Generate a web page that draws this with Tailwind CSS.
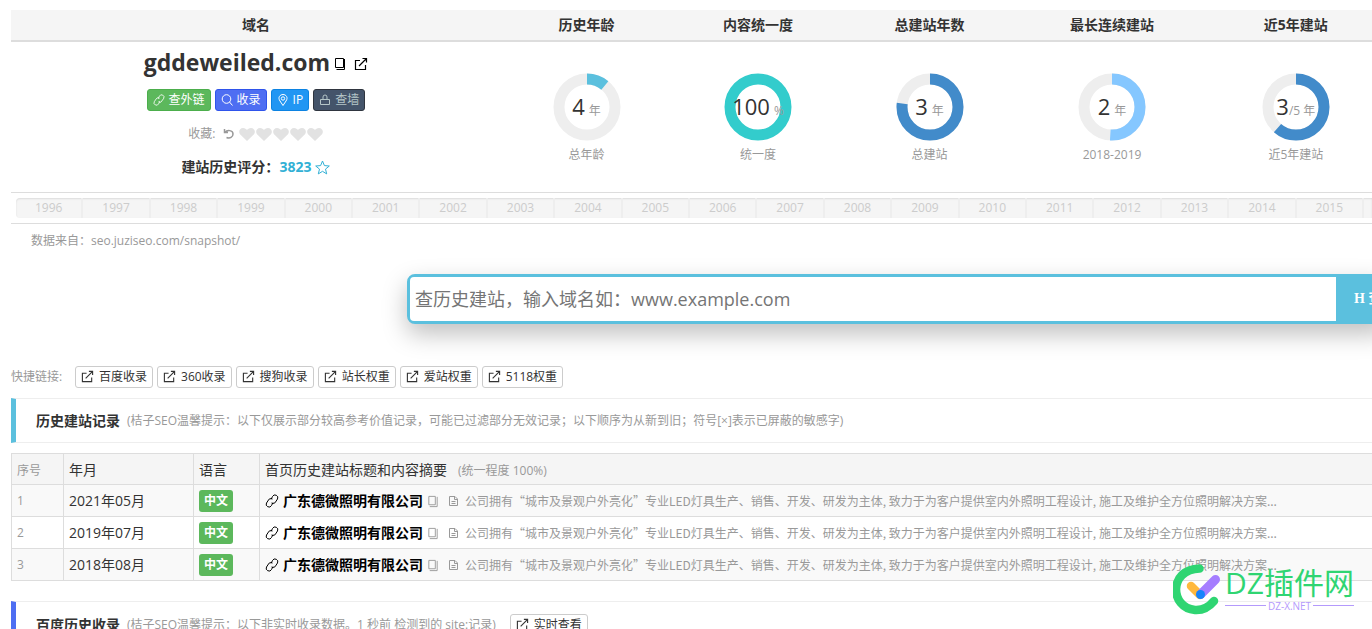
<!DOCTYPE html>
<html lang="zh-CN">
<head>
<meta charset="utf-8">
<title>历史建站查询</title>
<script src="https://cdn.jsdelivr.net/npm/@tailwindcss/browser@4"></script>
</head>
<body class="h-screen overflow-hidden bg-white font-['Open_Sans','Noto_Sans_CJK_SC',sans-serif] text-xs text-[#333]">
<svg class="hidden" aria-hidden="true">
  <symbol id="ext" viewBox="0 0 14 14" fill="none" stroke="currentColor" stroke-width="1.200"><path d="M6 3.500H1.500v9h10V8M5 9l7.500-7.500M8.500 1.500h4v4"/></symbol>
  <symbol id="copy" viewBox="0 0 12 14" fill="none" stroke="currentColor"><path d="M1.500 1.500h7v9h-7zM10.500 2v10.500h-8"/></symbol>
  <symbol id="link" viewBox="0 0 14 14" fill="none" stroke="currentColor"><path d="M6 5.500l1.500-3a2.700 2.700 0 0 1 5 2.500L10.500 8a2.700 2.700 0 0 1-4 1M8 8.500l-1.500 3a2.700 2.700 0 0 1-5-2.500L3.500 6a2.700 2.700 0 0 1 4-1"/></symbol>
  <symbol id="doc" viewBox="0 0 12 12" fill="none" stroke="currentColor"><path d="M1.500 1.500h5.500l2.500 2.500v6.500h-8zM6.500 1.500v3h3M3.500 6.500h4M3.500 8.500h4"/></symbol>
  <symbol id="heart" viewBox="0 0 16 13"><path fill="currentColor" d="M8 13L1 6.300C-1 3.500.8 0 4 0c2 0 3.200 1 4 2 .8-1 2-2 4-2 3.200 0 5 3.500 3 6.300z"/></symbol>
</svg>
<main class="relative h-full overflow-hidden pt-[10px] pl-[11px]">
  <section class="-mr-[11px]">
    <table class="w-full table-fixed border-collapse text-center">
      <colgroup><col class="w-[35.7%]"><col class="w-[12.5%]"><col class="w-[12.5%]"><col class="w-[12.5%]"><col class="w-[14.1%]"><col class="w-[12.7%]"></colgroup>
      <thead>
        <tr class="h-[31px] border-b-2 border-[#ddd] bg-[#f5f5f5] text-sm leading-5 font-bold">
          <th>域名</th><th>历史年龄</th><th>内容统一度</th><th>总建站年数</th><th>最长连续建站</th><th>近5年建站</th>
        </tr>
      </thead>
      <tbody>
        <tr class="h-[151px] border-b border-[#ddd] align-top">
          <td>
            <div class="mt-[3px] flex h-[34px] items-center justify-center">
              <h1 class="text-[23px] leading-8 font-bold">gddeweiled.com</h1>
              <button aria-label="复制" class="ml-1 pt-1 text-black"><svg class="h-[14px] w-3" viewBox="0 0 12 14" fill="none" stroke="currentColor"><path d="M1.500 1.500h8v9h-8zM10.500 2v10.500h-8"/></svg></button>
              <a href="#" aria-label="打开" class="ml-2 pt-1 text-black"><svg class="size-[14px]"><use href="#ext"/></svg></a>
            </div>
            <div class="mt-[10px] flex justify-center gap-1 leading-5 text-white">
              <a href="#" class="flex h-[22px] items-center gap-1 rounded-[3px] border border-[#4cae4c] bg-[#5cb85c] px-[5px]"><svg class="size-3"><use href="#link"/></svg>查外链</a>
              <a href="#" class="flex h-[22px] items-center gap-1 rounded-[3px] border border-[#2f54eb] bg-[#4e6ef2] px-[5px]"><svg class="size-3" viewBox="0 0 12 12" fill="none" stroke="currentColor"><circle cx="5.500" cy="5" r="4.300"/><path d="M8.500 8l3 3.500"/></svg>收录</a>
              <a href="#" class="flex h-[22px] items-center gap-1 rounded-[3px] border border-[#0c83e2] bg-[#2196f3] px-[5px]"><svg class="size-3" viewBox="0 0 12 12" fill="none" stroke="currentColor"><path d="M6 11.500L3 7C.5 3.500 3 .5 6 .5s5.500 3 3 6.500z"/><circle cx="6" cy="4.500" r="1.700"/></svg>IP</a>
              <a href="#" class="flex h-[22px] items-center gap-1 rounded-[3px] border border-[#2f353f] bg-[#44546a] px-[5px] text-[#b5c6c8]"><svg class="size-3" viewBox="0 0 12 12" fill="none" stroke="currentColor"><path d="M1.500 5.500h9v5h-9zM4 5.500V3q0-2 2-2t2 2v2.500"/></svg>查墙</a>
            </div>
            <div class="mt-[13px] flex h-5 items-center justify-center text-[#999]">
              <span>收藏:</span>
              <button aria-label="重置" class="mr-1 ml-2"><svg class="size-3" viewBox="0 0 12 12" fill="none" stroke="currentColor" stroke-width="1.500"><path d="M1.500 1v3.500H5M2 4.500C4 1.500 10 2 10 6c0 3-3 5-6.500 3.500"/></svg></button>
              <span class="flex gap-px text-[#e2e2e2]">
                <svg class="h-[13px] w-4"><use href="#heart"/></svg><svg class="h-[13px] w-4"><use href="#heart"/></svg><svg class="h-[13px] w-4"><use href="#heart"/></svg><svg class="h-[13px] w-4"><use href="#heart"/></svg><svg class="h-[13px] w-4"><use href="#heart"/></svg>
              </span>
            </div>
            <div class="mt-[13px] flex h-5 items-center justify-center text-sm font-bold">建站历史评分：<span class="text-[#31b0d5]">3823</span><svg class="ml-1 size-[15px] text-[#31b0d5]" viewBox="0 0 15 15" fill="none" stroke="currentColor"><path d="M7.500 1l1.900 4.600 4.900.4-3.800 3.100 1.200 4.800-4.200-2.600-4.200 2.600 1.200-4.800L.7 6l4.900-.4z"/></svg></div>
          </td>
          <td class="pt-[31px]">
            <div class="relative mx-auto size-[68px]">
              <svg viewBox="0 0 68 68" class="-rotate-90" fill="none" stroke-width="11"><circle cx="34" cy="34" r="28" stroke="#eee"/><circle cx="34" cy="34" r="28" stroke="#5bc0de" pathLength="100" stroke-dasharray="11 100"/></svg>
              <p class="absolute inset-0 flex items-baseline justify-center gap-1 pt-[17px] text-[22px] leading-8 whitespace-nowrap">4<span class="text-xs text-[#999]">年</span></p>
            </div>
            <p class="mt-1 leading-5 text-[#999]">总年龄</p>
          </td>
          <td class="pt-[31px]">
            <div class="relative mx-auto size-[68px]">
              <svg viewBox="0 0 68 68" class="-rotate-90" fill="none" stroke-width="11"><circle cx="34" cy="34" r="28" stroke="#3cc"/></svg>
              <p class="absolute inset-0 flex items-baseline justify-center gap-1 pt-[17px] text-[22px] leading-8 whitespace-nowrap">100<span class="text-xs text-[#999]">%</span></p>
            </div>
            <p class="mt-1 leading-5 text-[#999]">统一度</p>
          </td>
          <td class="pt-[31px]">
            <div class="relative mx-auto size-[68px]">
              <svg viewBox="0 0 68 68" class="-rotate-90" fill="none" stroke-width="11"><circle cx="34" cy="34" r="28" stroke="#eee"/><circle cx="34" cy="34" r="28" stroke="#428bca" pathLength="100" stroke-dasharray="77 100"/></svg>
              <p class="absolute inset-0 flex items-baseline justify-center gap-1 pt-[17px] text-[22px] leading-8 whitespace-nowrap">3<span class="text-xs text-[#999]">年</span></p>
            </div>
            <p class="mt-1 leading-5 text-[#999]">总建站</p>
          </td>
          <td class="pt-[31px]">
            <div class="relative mx-auto size-[68px]">
              <svg viewBox="0 0 68 68" class="-rotate-90" fill="none" stroke-width="11"><circle cx="34" cy="34" r="28" stroke="#eee"/><circle cx="34" cy="34" r="28" stroke="#85c7ff" pathLength="100" stroke-dasharray="51 100"/></svg>
              <p class="absolute inset-0 flex items-baseline justify-center gap-1 pt-[17px] text-[22px] leading-8 whitespace-nowrap">2<span class="text-xs text-[#999]">年</span></p>
            </div>
            <p class="mt-1 leading-5 text-[#999]">2018-2019</p>
          </td>
          <td class="pt-[31px]">
            <div class="relative mx-auto size-[68px]">
              <svg viewBox="0 0 68 68" class="-rotate-90" fill="none" stroke-width="11"><circle cx="34" cy="34" r="28" stroke="#eee"/><circle cx="34" cy="34" r="28" stroke="#428bca" pathLength="100" stroke-dasharray="61.500 100"/></svg>
              <p class="absolute inset-0 flex items-baseline justify-center pt-[17px] text-[22px] leading-8 whitespace-nowrap">3<span class="text-xs text-[#999]">/5 年</span></p>
            </div>
            <p class="mt-1 leading-5 text-[#999]">近5年建站</p>
          </td>
        </tr>
      </tbody>
    </table>
  </section>
  <section class="border-b border-[#ddd] py-[5px] pl-[5px]">
    <ol class="grid h-5 grid-cols-[repeat(20,minmax(0,1fr))_8px] overflow-hidden rounded-l bg-[#f5f5f5] text-center leading-5 text-[#ccc] shadow-[inset_0_1px_2px_rgba(0,0,0,0.1)] [&>li:not(:last-child)]:border-r-2 [&>li]:border-[#eee]">
      <li>1996</li><li>1997</li><li>1998</li><li>1999</li><li>2000</li><li>2001</li><li>2002</li><li>2003</li><li>2004</li><li>2005</li><li>2006</li><li>2007</li><li>2008</li><li>2009</li><li>2010</li><li>2011</li><li>2012</li><li>2013</li><li>2014</li><li>2015</li><li></li>
    </ol>
  </section>
  <p class="mt-[7px] pl-5 leading-5 text-[#999]">数据来自：seo.juziseo.com/snapshot/</p>
  <form class="mt-[23px] -mr-4 ml-[29.1%] flex h-[50px] rounded-lg border-[3px] border-[#5bc0de] bg-[#5bc0de] shadow-[0_10px_24px_rgba(0,0,0,0.25)]">
    <input type="text" aria-label="域名" placeholder="查历史建站，输入域名如：www.example.com" class="min-w-0 flex-1 rounded-l-[4px] bg-white px-[5px] text-lg placeholder:text-[#757575] focus:outline-none">
    <button type="button" class="w-[49px] shrink-0 overflow-hidden pl-[18px] text-left font-['Liberation_Serif','Noto_Sans_CJK_SC',serif] text-sm font-bold whitespace-nowrap text-white">H 查询</button>
  </form>
  <nav class="mt-[42px] flex h-[22px] items-center gap-1 leading-5 *:[a]:flex *:[a]:h-[22px] *:[a]:items-center *:[a]:gap-[5px] *:[a]:rounded-[3px] *:[a]:border *:[a]:border-[#ccc] *:[a]:px-[5px]">
    <span class="w-[60px] text-[#999]">快捷链接:</span>
    <a href="#"><svg class="size-[13px]"><use href="#ext"/></svg>百度收录</a>
    <a href="#"><svg class="size-[13px]"><use href="#ext"/></svg>360收录</a>
    <a href="#"><svg class="size-[13px]"><use href="#ext"/></svg>搜狗收录</a>
    <a href="#"><svg class="size-[13px]"><use href="#ext"/></svg>站长权重</a>
    <a href="#"><svg class="size-[13px]"><use href="#ext"/></svg>爱站权重</a>
    <a href="#"><svg class="size-[13px]"><use href="#ext"/></svg>5118权重</a>
  </nav>
  <section class="mt-[10px] flex h-[45px] items-center border-y border-l-[5px] border-[#eee] border-l-[#5bc0de] pt-[2px] pl-5 whitespace-nowrap">
    <h2 class="text-sm font-bold">历史建站记录</h2>
    <p class="ml-[7px] text-[#999]">(桔子SEO温馨提示：以下仅展示部分较高参考价值记录，可能已过滤部分无效记录；以下顺序为从新到旧；符号[×]表示已屏蔽的敏感字)</p>
  </section>
  <table class="mt-[10px] w-full table-fixed border-collapse border border-r-0 border-[#ddd] text-left whitespace-nowrap [&_td]:border-l [&_td]:border-[#ddd] [&_td]:px-[5px] [&_td]:pt-[2px] [&_th]:border-l [&_th]:border-[#ddd] [&_th]:px-[5px] [&_th]:pt-[2px] [&_th]:font-normal">
    <colgroup><col class="w-[52px]"><col class="w-[130px]"><col class="w-[66px]"><col></colgroup>
    <thead>
      <tr class="h-[31px] bg-[#f5f5f5] text-sm"><th><span class="text-xs text-[#999]">序号</span></th><th>年月</th><th>语言</th><th>首页历史建站标题和内容摘要<span class="ml-[11px] text-xs text-[#999]">(统一程度 100%)</span></th></tr>
    </thead>
    <tbody>
      <tr class="h-8 border-t border-[#ddd] bg-[#f9f9f9]"><td class="text-[#999]">1</td><td class="text-sm">2021年05月</td><td><span class="inline-block h-[22px] rounded-[3px] bg-[#5cb85c] px-[5px] leading-[22px] font-bold text-white">中文</span></td>
        <td><div class="flex items-center text-[#999]"><svg class="size-[14px] text-black"><use href="#link"/></svg><a href="#" class="ml-1 text-sm font-bold text-black">广东德微照明有限公司</a><button aria-label="复制" class="mr-[9px] ml-1"><svg class="h-[13px] w-3"><use href="#copy"/></svg></button><svg class="mr-[5px] size-3"><use href="#doc"/></svg><span class="font-['Noto_Sans_CJK_SC',sans-serif]">公司拥有“城市及景观户外亮化”专业LED灯具生产、销售、开发、研发为主体, 致力于为客户提供室内外照明工程设计, 施工及维护全方位照明解决方案...</span></div></td></tr>
      <tr class="h-8 border-t border-[#ddd]"><td class="text-[#999]">2</td><td class="text-sm">2019年07月</td><td><span class="inline-block h-[22px] rounded-[3px] bg-[#5cb85c] px-[5px] leading-[22px] font-bold text-white">中文</span></td>
        <td><div class="flex items-center text-[#999]"><svg class="size-[14px] text-black"><use href="#link"/></svg><a href="#" class="ml-1 text-sm font-bold text-black">广东德微照明有限公司</a><button aria-label="复制" class="mr-[9px] ml-1"><svg class="h-[13px] w-3"><use href="#copy"/></svg></button><svg class="mr-[5px] size-3"><use href="#doc"/></svg><span class="font-['Noto_Sans_CJK_SC',sans-serif]">公司拥有“城市及景观户外亮化”专业LED灯具生产、销售、开发、研发为主体, 致力于为客户提供室内外照明工程设计, 施工及维护全方位照明解决方案...</span></div></td></tr>
      <tr class="h-8 border-t border-[#ddd] bg-[#f9f9f9]"><td class="text-[#999]">3</td><td class="text-sm">2018年08月</td><td><span class="inline-block h-[22px] rounded-[3px] bg-[#5cb85c] px-[5px] leading-[22px] font-bold text-white">中文</span></td>
        <td><div class="flex items-center text-[#999]"><svg class="size-[14px] text-black"><use href="#link"/></svg><a href="#" class="ml-1 text-sm font-bold text-black">广东德微照明有限公司</a><button aria-label="复制" class="mr-[9px] ml-1"><svg class="h-[13px] w-3"><use href="#copy"/></svg></button><svg class="mr-[5px] size-3"><use href="#doc"/></svg><span class="font-['Noto_Sans_CJK_SC',sans-serif]">公司拥有“城市及景观户外亮化”专业LED灯具生产、销售、开发、研发为主体, 致力于为客户提供室内外照明工程设计, 施工及维护全方位照明解决方案...</span></div></td></tr>
    </tbody>
  </table>
  <section class="mt-5 flex h-[45px] items-center border-y border-l-[5px] border-[#eee] border-l-[#4e6ef2] pt-[3px] pl-5 whitespace-nowrap">
    <h2 class="text-sm font-bold">百度历史收录</h2>
    <p class="ml-[7px] text-[#999]">(桔子SEO温馨提示：以下非实时收录数据。1 秒前 检测到的 site:记录)</p>
    <a href="#" class="ml-[14px] flex h-[22px] items-center gap-[5px] rounded-[3px] border border-[#ccc] px-[5px]"><svg class="size-[13px]"><use href="#ext"/></svg>实时查看</a>
  </section>
  <aside class="absolute right-[18px] bottom-[14px] flex items-center">
    <svg class="h-[51px] w-12" viewBox="0 0 48 51" fill="none" stroke-linecap="round"><path d="M26.500 4.500C-5 5.500-3 44 22 46c8 .5 14-3 19-9" stroke="#2fd572" stroke-width="8.500"/><path d="M18 22l9 9" stroke="#ffb83d" stroke-width="8.500"/><path d="M28 30l14.500-14.500" stroke="#a57dff" stroke-width="9"/><circle cx="27.500" cy="30.500" r="4.500" fill="#1683fb"/></svg>
    <div class="ml-1 whitespace-nowrap">
      <p class="text-[30px] leading-8 text-[#2fd572]">DZ插件网</p>
      <p class="flex items-center gap-[2px] text-[10px] leading-[14px] text-[#b49afc] before:h-px before:flex-1 before:bg-[#b49afc] after:h-px after:flex-1 after:bg-[#b49afc]">DZ-X.NET</p>
    </div>
  </aside>
</main>
</body>
</html>
